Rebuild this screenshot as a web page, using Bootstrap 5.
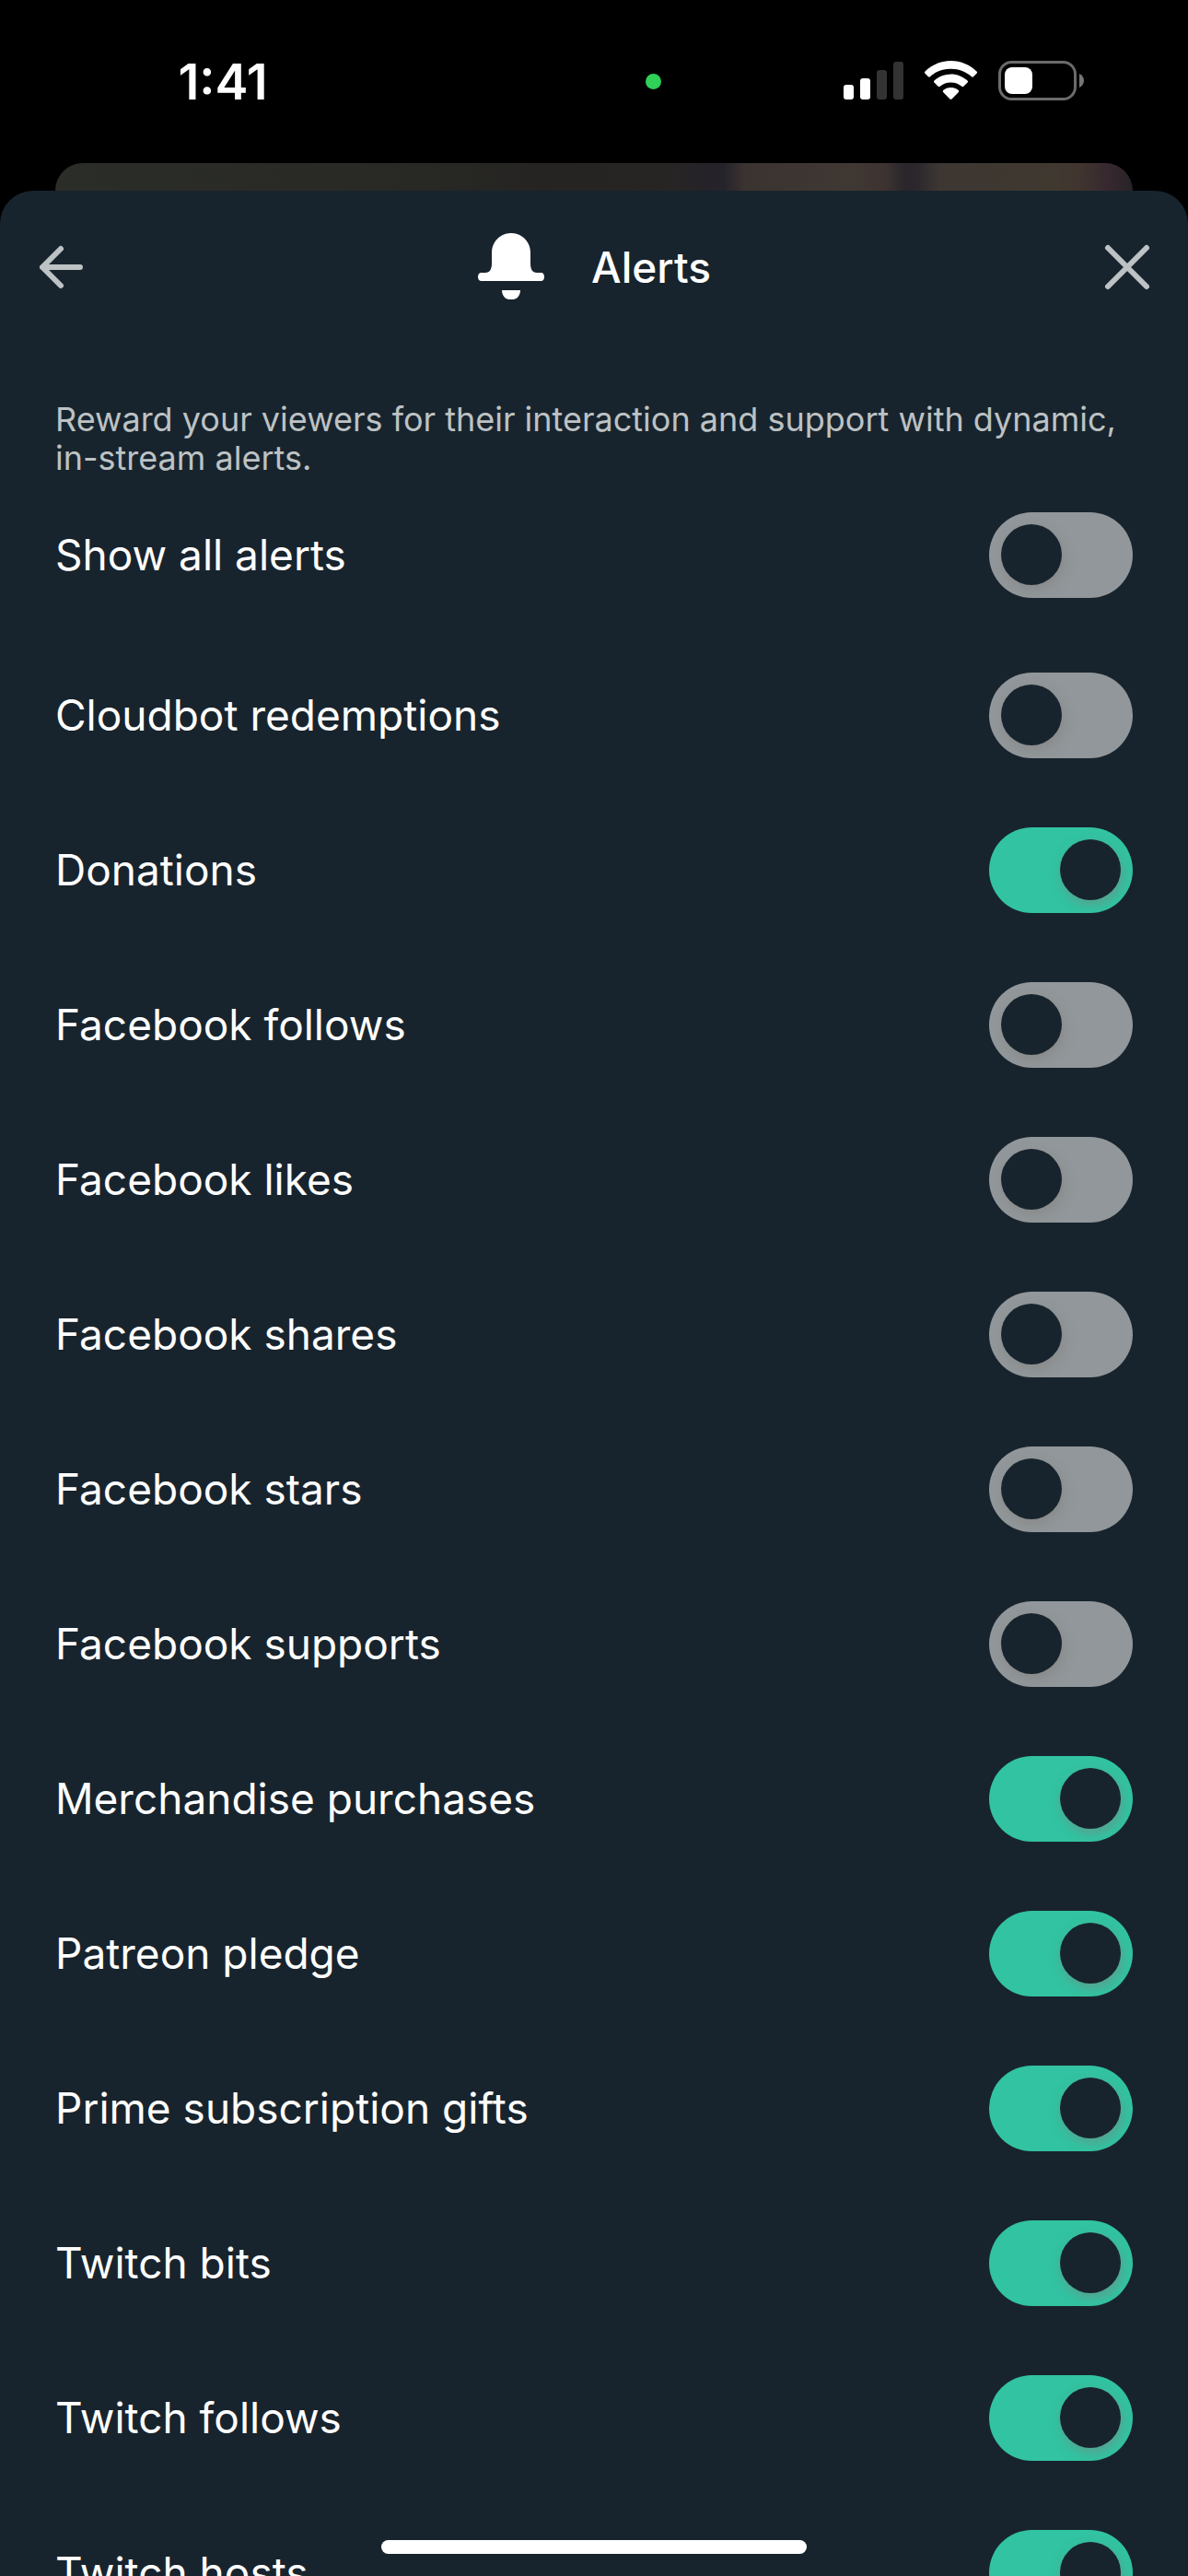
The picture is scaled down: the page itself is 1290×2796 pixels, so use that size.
<!DOCTYPE html>
<html lang="en">
<head>
<meta charset="utf-8">
<meta name="viewport" content="width=device-width, initial-scale=1">
<title>Alerts</title>
<link href="https://cdn.jsdelivr.net/npm/bootstrap@5.3.0/dist/css/bootstrap.min.css" rel="stylesheet">
<style>
  :root { --sheet: #18242d; --muted: #bdc2c4; --on: #31c3a2; --off: #91979a; --gutter: 60px; }
  body { background: #000; color: #fff; font-family: Inter, "Liberation Sans", sans-serif; }
  .status-bar { height: 177px; }
  .status-time { font-size: 54px; line-height: 60px; font-weight: 600; }
  .island { width: 322px; padding-right: 88px; }
  .cam-dot { width: 17px; height: 17px; background: #30d158; }
  .peek { height: 30px; margin: 0 var(--gutter); border-radius: 30px 30px 0 0;
    background: linear-gradient(90deg, #2b2d28 0%, #292a26 28%, #252422 45%, #272524 57%, #25222a 61%, #25232b 62%, #3b3330 64%, #403833 74%, #3d3331 77%, #29252b 79%, #2b272c 80%, #3d3632 82%, #403930 93%, #40352f 95%, #35272f 98%, #272326 100%); }
  .sheet { background: var(--sheet); border-radius: 36px 36px 0 0; min-height: 0; }
  .sheet-head { height: 166px; padding: 0 30px; }
  .icon-btn { width: 72px; height: 72px; color: var(--muted); }
  .sheet-title { font-size: 46px; line-height: 60px; font-weight: 500; }
  .sheet-body { padding: 61px var(--gutter) 0; min-height: 0; overflow-y: auto; scrollbar-width: none; }
  .intro { font-size: 36px; line-height: 42px; color: var(--muted); }
  .alert-row { height: 168px; }
  .alert-row + .alert-list { margin-top: 6px; }
  .alert-row label { font-size: 46px; line-height: 60px; }
  .alert-row .toggle { width: 156px; height: 93px; margin: 0; border: 0; border-radius: 47px; appearance: none;
    background: var(--off); padding: 13px; cursor: pointer; display: flex; flex: none; }
  .toggle::before { content: ""; width: 66px; height: 66px; border-radius: 50%; background: var(--sheet);
    box-shadow: 2px 5px 12px rgba(130, 125, 122, .5); }
  .alert-row .toggle:checked { background: var(--on); justify-content: flex-end; }
  .home-bar { width: 462px; height: 15px; bottom: 24px; }
</style>
<script src="https://cdn.jsdelivr.net/npm/bootstrap@5.3.0/dist/js/bootstrap.bundle.min.js"></script>
</head>
<body class="vh-100 overflow-hidden d-flex flex-column position-relative">
<header class="status-bar d-flex align-items-center flex-shrink-0">
  <div class="flex-fill w-25 text-center status-time">1:41</div>
  <div class="island d-flex justify-content-end flex-shrink-0"><span class="cam-dot rounded-circle"></span></div>
  <div class="flex-fill w-25 d-flex justify-content-center">
    <svg width="264" height="46" viewBox="0 0 264 46" role="img" aria-label="Signal, Wi-Fi and battery">
      <g fill="#fff">
        <rect x="0" y="26" width="11" height="16" rx="3"/><rect x="18" y="19" width="11" height="23" rx="3"/>
        <rect x="36" y="10" width="11" height="32" rx="3" fill="#333"/><rect x="54" y="1" width="11" height="41" rx="3" fill="#333"/>
        <path d="M116.500 0C127.500 0 137.500 4.500 144.500 11.500Q145.500 12.500 144.700 13.500L141 17.300Q140 18.200 139 17.300C133 11.700 125.500 8.700 116.500 8.700S100 11.700 94 17.300Q93 18.200 92 17.300L88.300 13.500Q87.500 12.500 88.500 11.500C95.500 4.500 105.500 0 116.500 0Z"/>
        <path d="M116.500 14.500C123.500 14.500 129.700 17.200 134.500 21.600Q135.500 22.600 134.600 23.600L130.300 27.800Q129.300 28.700 128.300 27.800C125 25 121 23.500 116.500 23.500S108 25 104.700 27.800Q103.700 28.700 102.700 27.800L98.400 23.600Q97.500 22.600 98.500 21.600C103.300 17.200 109.500 14.500 116.500 14.500Z"/>
        <path d="M116.500 29C119.800 29 122.500 30.100 124.800 31.900Q125.800 32.900 124.900 33.900L117.500 41.400Q116.500 42.300 115.500 41.400L108.100 33.900Q107.200 32.900 108.200 31.900C110.500 30.100 113.200 29 116.500 29Z"/>
        <rect x="169.500" y="1.500" width="82" height="40" rx="13" fill="none" stroke="#6b6b6b" stroke-width="3"/>
        <rect x="175" y="7" width="30" height="29" rx="8"/>
        <path d="M256 14C259 15.500 261 18 261 21.500S259 27.500 256 29Z" fill="#757575"/>
      </g>
    </svg>
  </div>
</header>
<div class="peek flex-shrink-0"></div>
<main class="sheet flex-fill d-flex flex-column">
  <div class="sheet-head d-flex align-items-center justify-content-between flex-shrink-0">
    <button class="icon-btn btn border-0 p-0 d-flex align-items-center" aria-label="Back">
      <svg width="72" height="72" viewBox="0 0 72 72" fill="none" stroke="currentColor" stroke-width="6" stroke-linecap="round" stroke-linejoin="round"><path d="M36 16L16 36L36 56M16 36H57"/></svg>
    </button>
    <div class="d-flex align-items-center gap-5">
      <svg width="76" height="76" viewBox="0 0 76 76" fill="#fff" aria-hidden="true"><path d="M37 1C48.500 1 58 10 58 22V34C58 40 60 44 65 44H69C72 44 73 46 73 48.500S72 53 69 53H5C2 53 1 51 1 48.500S2 44 5 44H9C14 44 16 40 16 34V22C16 10 25.500 1 37 1ZM27 63H47C47 69 43 73 39 73H35C31 73 27 69 27 63Z"/></svg>
      <h1 class="sheet-title mb-0">Alerts</h1>
    </div>
    <button class="icon-btn btn border-0 p-0 d-flex align-items-center" aria-label="Close">
      <svg width="72" height="72" viewBox="0 0 72 72" fill="none" stroke="currentColor" stroke-width="6" stroke-linecap="round"><path d="M15 15L57 57M57 15L15 57"/></svg>
    </button>
  </div>
  <div class="sheet-body flex-fill">
    <p class="intro mb-0">Reward your viewers for their interaction and support with dynamic, in-stream alerts.</p>
    <div class="alert-row d-flex align-items-center justify-content-between"><label for="a0">Show all alerts</label><input class="toggle" type="checkbox" role="switch" id="a0"></div>
    <div class="alert-list">
      <div class="alert-row d-flex align-items-center justify-content-between"><label for="a1">Cloudbot redemptions</label><input class="toggle" type="checkbox" role="switch" id="a1"></div>
      <div class="alert-row d-flex align-items-center justify-content-between"><label for="a2">Donations</label><input class="toggle" type="checkbox" role="switch" id="a2" checked></div>
      <div class="alert-row d-flex align-items-center justify-content-between"><label for="a3">Facebook follows</label><input class="toggle" type="checkbox" role="switch" id="a3"></div>
      <div class="alert-row d-flex align-items-center justify-content-between"><label for="a4">Facebook likes</label><input class="toggle" type="checkbox" role="switch" id="a4"></div>
      <div class="alert-row d-flex align-items-center justify-content-between"><label for="a5">Facebook shares</label><input class="toggle" type="checkbox" role="switch" id="a5"></div>
      <div class="alert-row d-flex align-items-center justify-content-between"><label for="a6">Facebook stars</label><input class="toggle" type="checkbox" role="switch" id="a6"></div>
      <div class="alert-row d-flex align-items-center justify-content-between"><label for="a7">Facebook supports</label><input class="toggle" type="checkbox" role="switch" id="a7"></div>
      <div class="alert-row d-flex align-items-center justify-content-between"><label for="a8">Merchandise purchases</label><input class="toggle" type="checkbox" role="switch" id="a8" checked></div>
      <div class="alert-row d-flex align-items-center justify-content-between"><label for="a9">Patreon pledge</label><input class="toggle" type="checkbox" role="switch" id="a9" checked></div>
      <div class="alert-row d-flex align-items-center justify-content-between"><label for="a10">Prime subscription gifts</label><input class="toggle" type="checkbox" role="switch" id="a10" checked></div>
      <div class="alert-row d-flex align-items-center justify-content-between"><label for="a11">Twitch bits</label><input class="toggle" type="checkbox" role="switch" id="a11" checked></div>
      <div class="alert-row d-flex align-items-center justify-content-between"><label for="a12">Twitch follows</label><input class="toggle" type="checkbox" role="switch" id="a12" checked></div>
      <div class="alert-row d-flex align-items-center justify-content-between"><label for="a13">Twitch hosts</label><input class="toggle" type="checkbox" role="switch" id="a13" checked></div>
    </div>
  </div>
</main>
<div class="home-bar position-absolute start-50 translate-middle-x bg-white rounded-pill"></div>
</body>
</html>
